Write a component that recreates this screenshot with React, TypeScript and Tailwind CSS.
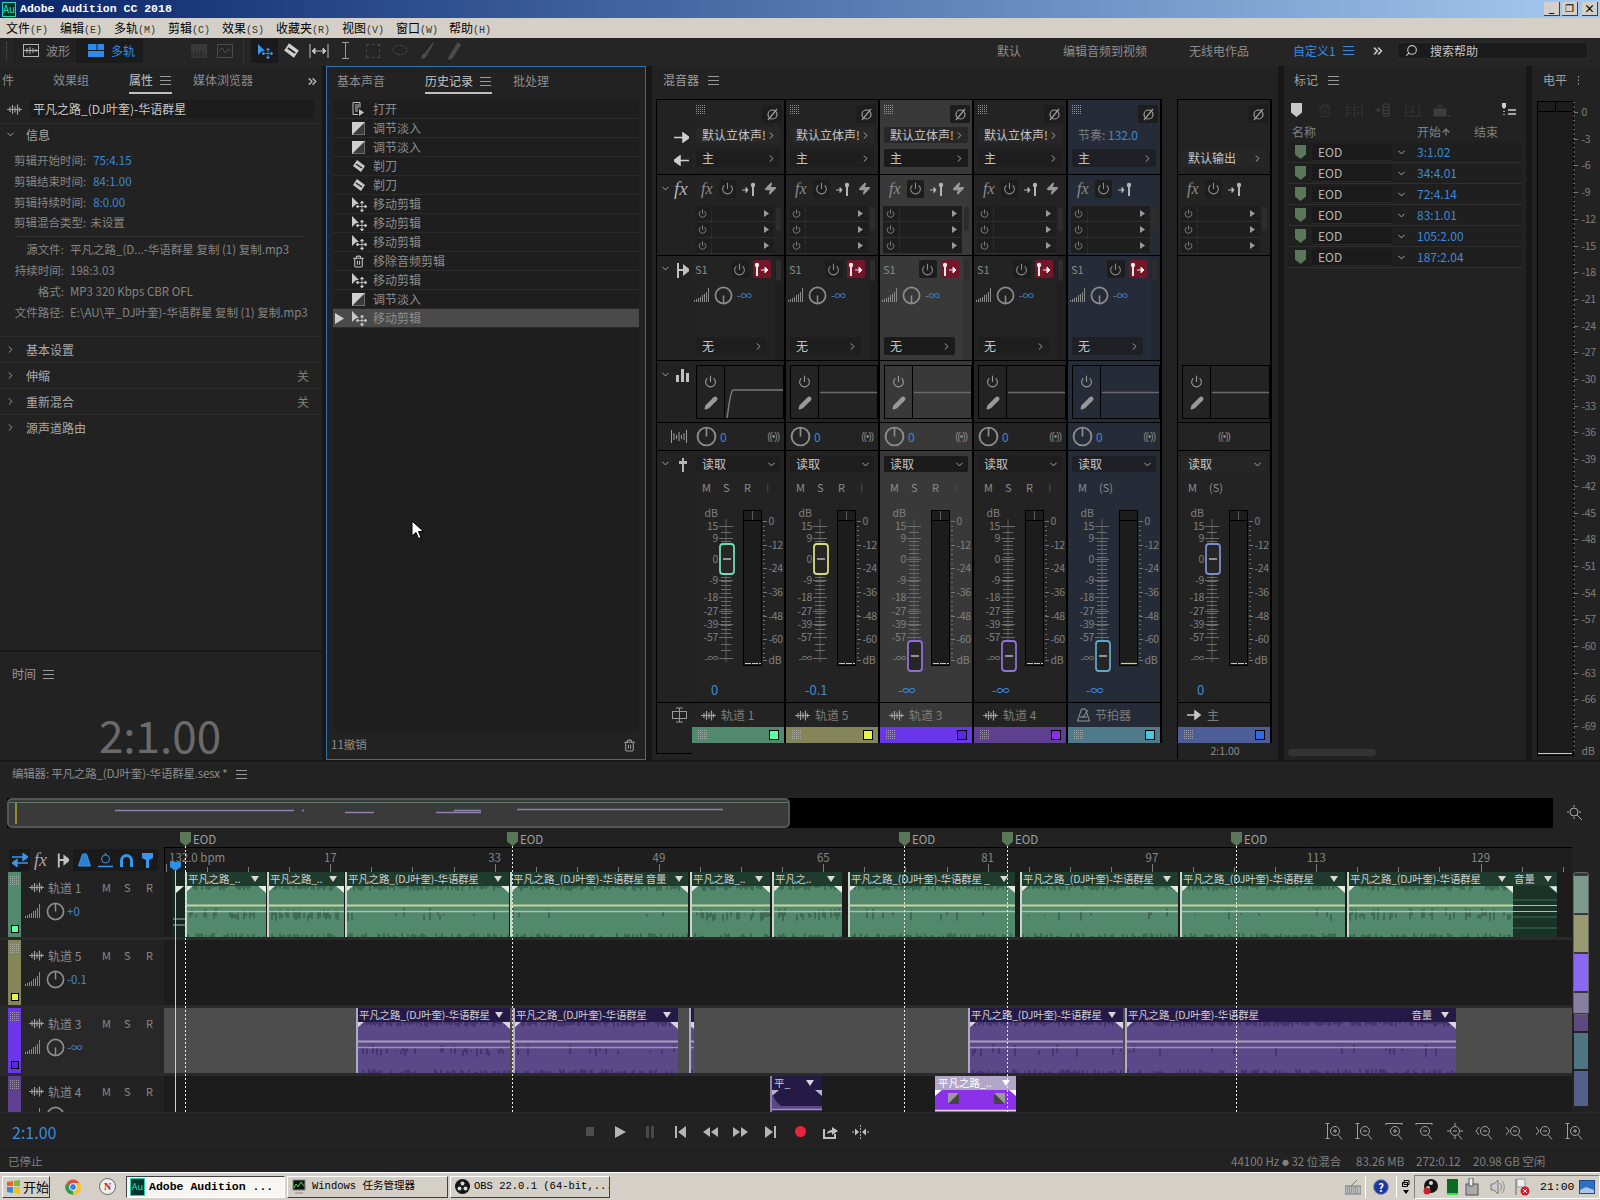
import React from "react";
import { ChevronRight, ChevronDown, Power, Pencil, Trash2, Search, ChevronsRight, ArrowUp, Zap } from "lucide-react";

const PANEL = "bg-[#222222]";

const Burger = ({ className = "text-[#9a9a9a]" }: { className?: string }) => (
  <svg width="11" height="9" viewBox="0 0 11 9" className={className}>
    <path d="M0 .5h11M0 4.5h11M0 8.5h11" stroke="currentColor" fill="none" />
  </svg>
);

const WaveIcon = ({ className = "text-[#a0a0a0]" }: { className?: string }) => (
  <svg width="15" height="11" viewBox="0 0 15 11" className={className}>
    <path d="M0 5.5h15M3 3v5M5.5 1v9M8 2.500v6M10.500 .5v10M12.500 3.500v4" stroke="currentColor" strokeWidth="1.200" fill="none" />
  </svg>
);

const Knob = ({ r = 8, down = false, color = "#8c8c8c" }: { r?: number; down?: boolean; color?: string }) => (
  <svg width={r * 2 + 3} height={r * 2 + 3} viewBox="-10 -10 20 20" className="shrink-0">
    <circle r="8.500" fill="none" stroke={color} strokeWidth="1.800" />
    <path d={down ? "M0 0V9" : "M0 0V-9"} stroke={color} strokeWidth="1.600" />
  </svg>
);

const Bars = () => (
  <svg width="16" height="15" viewBox="0 0 16 15" className="shrink-0">
    <path d="M.5 14v-2M2.500 14v-3M4.500 14v-4M6.500 14v-5M8.500 14v-7M10.500 14v-8M12.500 14v-10M14.500 14V0" stroke="#8a8a8a" strokeWidth="1" />
  </svg>
);

const Dots = () => (
  <svg width="10" height="10" viewBox="0 0 10 10" className="shrink-0">
    <path d="M0 .5h10M0 2.500h10M0 4.500h10M0 6.500h10M0 8.500h10" stroke="#b5b5b5" strokeDasharray="1 1" strokeOpacity=".75" />
  </svg>
);

const FadeIcon = () => (
  <svg width="13" height="13" viewBox="0 0 13 13">
    <rect width="13" height="13" fill="#3b3b3b" stroke="#9a9a9a" />
    <path d="M0 13L13 0V13Z" fill="#cfcfcf" transform="rotate(180 6.500 6.500)" />
  </svg>
);

const RazorIcon = () => (
  <svg width="14" height="14" viewBox="0 0 14 14">
    <path d="M5 1l8 6-4 6-8-6z" fill="#c8c8c8" />
    <path d="M4 5l6 4" stroke="#222" strokeWidth="1.500" />
  </svg>
);

const MoveIcon = ({ color = "#c9c9c9" }: { color?: string }) => (
  <svg width="16" height="16" viewBox="0 0 16 16">
    <path d="M1 1v11l3-3 1.500-1H8z" fill={color} />
    <path d="M11 6v9M6.500 10.500h9M11 5l-1.500 2h3zM11 16l-1.500-2h3zM5 10.500l2-1.500v3zM16 10.500l-2-1.500v3z" stroke={color} strokeWidth=".8" fill={color} />
  </svg>
);

const OpenIcon = () => (
  <svg width="13" height="14" viewBox="0 0 13 14">
    <path d="M1 .5h7v5M1 .5v12h5" stroke="#c0c0c0" fill="none" />
    <path d="M3 3h4M3 5h4M3 7h3M3 9h3" stroke="#c0c0c0" />
    <path d="M7 7v7l5-3.500z" fill="#c0c0c0" />
  </svg>
);

const Shield = ({ className = "text-[#5b7659]" }: { className?: string }) => (
  <svg width="11" height="14" viewBox="0 0 11 14" className={className}>
    <path d="M0 0h11v9.500L5.500 14 0 9.500z" fill="currentColor" />
  </svg>
);

const PhaseBtn = () => (
  <div className="w-[20px] h-[18px] flex items-center justify-center bg-[#1d1d1d] rounded-[2px]">
    <svg width="13" height="13" viewBox="0 0 13 13">
      <circle cx="6.500" cy="6.500" r="4.500" fill="none" stroke="#a0a0a0" strokeWidth="1.200" />
      <path d="M2 12L11 1" stroke="#a0a0a0" strokeWidth="1.200" />
    </svg>
  </div>
);

const SendArrow = ({ color = "#b5b5b5" }: { color?: string }) => (
  <svg width="15" height="14" viewBox="0 0 15 14">
    <path d="M0 8h6M6 8l-2-2.500v5z" stroke={color} fill={color} />
    <circle cx="11" cy="3" r="2.200" fill={color} />
    <rect x="10" y="3" width="2" height="11" fill={color} />
  </svg>
);

const TitleBar = () => (
  <div className="h-[18px] flex items-center bg-gradient-to-r from-[#0a246a] to-[#a6caf0] shrink-0">
    <div className="ml-[2px] w-[14px] h-[15px] flex items-center justify-center border border-[#23d8b0] bg-[#00332c] text-[#33e0bb] text-[10px] leading-none">
      Au
    </div>
    <span className="ml-[4px] text-white font-bold text-[11.500px] [font-family:'Liberation_Mono',monospace]">
      Adobe Audition CC 2018
    </span>
    <div className="ml-auto mr-[2px] flex gap-[2px]">
      <div className="w-[16px] h-[14px] bg-[#d4d0c8] border-b border-r border-[#404040] text-[10px] leading-[12px] text-center font-bold text-black">_</div>
      <div className="w-[16px] h-[14px] bg-[#d4d0c8] border-b border-r border-[#404040] text-[10px] leading-[12px] text-center text-black">❐</div>
      <div className="ml-[2px] w-[16px] h-[14px] bg-[#d4d0c8] border-b border-r border-[#404040] text-[11px] leading-[12px] text-center font-bold text-black">×</div>
    </div>
  </div>
);

const menus = [
  { t: "文件", k: "(F)", w: "w-[54px]" },
  { t: "编辑", k: "(E)", w: "w-[54px]" },
  { t: "多轨", k: "(M)", w: "w-[54px]" },
  { t: "剪辑", k: "(C)", w: "w-[54px]" },
  { t: "效果", k: "(S)", w: "w-[54px]" },
  { t: "收藏夹", k: "(R)", w: "w-[66px]" },
  { t: "视图", k: "(V)", w: "w-[54px]" },
  { t: "窗口", k: "(W)", w: "w-[53px]" },
  { t: "帮助", k: "(H)", w: "w-[54px]" },
];

const MenuBar = () => (
  <div className="h-[20px] flex items-center pl-[6px] bg-[#d4d0c8] shrink-0 text-[12px] text-black">
    {menus.map((m) => (
      <span key={m.t} className={`${m.w} whitespace-nowrap`}>
        {m.t}
        <span className="text-[10px] text-[#333] [font-family:'Liberation_Mono',monospace]">{m.k}</span>
      </span>
    ))}
  </div>
);

const ToolSlot = ({ children, active = false }: { children: React.ReactNode; active?: boolean }) => (
  <div className={`w-[27px] h-[24px] flex items-center justify-center ${active ? "bg-[#1a1a1a]" : ""}`}>{children}</div>
);

const dimStroke = "#4b4b4b";

const Toolbar = () => (
  <div className="h-[28px] pb-[3px] flex items-center bg-[#252525] shrink-0 text-[12px] text-[#8d8d8d]">
    <div className="ml-[6px] w-[3px] h-[18px] border-l border-dotted border-[#555]" />
    <div className="ml-[5px] w-[62px] h-[24px] flex items-center pl-[9px] gap-[7px] bg-[#222]">
      <svg width="16" height="13" viewBox="0 0 16 13">
        <rect x=".5" y=".5" width="15" height="12" fill="none" stroke="#b5b5b5" />
        <path d="M1 6.500h14M4 4v5M7 3v7M10 4v5M13 5v3" stroke="#b5b5b5" />
      </svg>
      波形
    </div>
    <div className="w-[67px] h-[24px] flex items-center pl-[12px] gap-[7px] bg-[#1b1b1b] text-[#2d8ceb]">
      <svg width="16" height="13" viewBox="0 0 16 13">
        <rect width="16" height="13" fill="#2d8ceb" />
        <path d="M0 6.500h16M9 0v6" stroke="#1b1b1b" />
      </svg>
      多轨
    </div>
    <div className="ml-[43px] w-[26px] flex justify-center">
      <svg width="16" height="14" viewBox="0 0 16 14">
        <rect width="16" height="14" fill="#393939" />
        <path d="M1 13V9M4 13V7M7 13V8M10 13V6M13 13V8" stroke="#222" />
      </svg>
    </div>
    <div className="w-[26px] flex justify-center">
      <svg width="16" height="14" viewBox="0 0 16 14">
        <rect x=".5" y=".5" width="15" height="13" fill="none" stroke={dimStroke} />
        <path d="M2 7l3-3 3 5 3-4 3 2" stroke={dimStroke} fill="none" />
      </svg>
    </div>
    <div className="ml-[5px] w-px h-[24px] bg-[#333]" />
    <div className="ml-[7px] flex items-center">
      <ToolSlot active>
        <MoveIcon color="#3796ee" />
      </ToolSlot>
      <ToolSlot>
        <svg width="17" height="17" viewBox="0 0 14 14">
          <path d="M5 1l8 6-4 6-8-6z" fill="#cfcfcf" />
          <path d="M4 5l6 4" stroke="#222" strokeWidth="1.500" />
        </svg>
      </ToolSlot>
      <ToolSlot>
        <svg width="20" height="14" viewBox="0 0 20 14">
          <path d="M1 0v14M19 0v14M3 7h14M3 7l3-3v6zM17 7l-3-3v6z" stroke="#c0c0c0" fill="#c0c0c0" />
        </svg>
      </ToolSlot>
      <ToolSlot>
        <svg width="9" height="17" viewBox="0 0 9 17">
          <path d="M1 .5h7M1 16.500h7M4.500 1v15" stroke="#9a9a9a" fill="none" />
        </svg>
      </ToolSlot>
      <ToolSlot>
        <div className="w-[14px] h-[14px] border border-dashed border-[#4b4b4b]" />
      </ToolSlot>
      <ToolSlot>
        <svg width="16" height="14" viewBox="0 0 16 14">
          <ellipse cx="8" cy="6" rx="7" ry="4.500" fill="none" stroke={dimStroke} strokeDasharray="2 1" />
        </svg>
      </ToolSlot>
      <ToolSlot>
        <svg width="14" height="18" viewBox="0 0 14 18">
          <path d="M13 0L5 11l-3 2-1 4 4-1 2-3 7-12z" fill={dimStroke} />
        </svg>
      </ToolSlot>
      <ToolSlot>
        <svg width="14" height="18" viewBox="0 0 14 18">
          <path d="M11 0l3 3L5 17l-4 1 1-4z" fill={dimStroke} />
        </svg>
      </ToolSlot>
    </div>
    <span className="ml-[530px] w-[24px] whitespace-nowrap">默认</span>
    <span className="ml-[42px] w-[84px] whitespace-nowrap">编辑音频到视频</span>
    <span className="ml-[42px] w-[60px] whitespace-nowrap">无线电作品</span>
    <span className="ml-[44px] w-[42px] whitespace-nowrap text-[#2d8ceb]">自定义1</span>
    <div className="ml-[8px]">
      <Burger className="text-[#2d8ceb]" />
    </div>
    <ChevronsRight size={14} className="ml-[17px] text-[#c0c0c0]" strokeWidth={3} />
    <div className="ml-[12px] w-[191px] h-[17px] flex items-center bg-[#1b1b1b] border border-[#2c2c2c] text-[#c4c4c4]">
      <Search size={13} className="ml-[7px] -scale-x-100" />
      <span className="ml-[12px]">搜索帮助</span>
    </div>
  </div>
);

const infoRows = [
  ["剪辑开始时间:", "75:4.15"],
  ["剪辑结束时间:", "84:1.00"],
  ["剪辑持续时间:", "8:0.00"],
];
const fileRows = [
  ["源文件:", "平凡之路_(D...-华语群星 复制 (1) 复制.mp3"],
  ["持续时间:", "198:3.03"],
  ["格式:", "MP3 320 Kbps CBR OFL"],
  ["文件路径:", "E:\\AU\\平_DJ叶奎)-华语群星 复制 (1) 复制.mp3"],
];
const sections = [
  ["基本设置", ""],
  ["伸缩", "关"],
  ["重新混合", "关"],
  ["源声道路由", ""],
];

const LeftColumn = () => (
  <div className="w-[322px] flex flex-col gap-[2px] shrink-0">
    <div className={`h-[584px] ${PANEL}`}>
      <div className="h-[28px] flex items-end text-[12px] text-[#8d8d8d]">
        <span className="ml-[2px] w-[51px] pb-[5px]">件</span>
        <span className="w-[76px] pb-[5px]">效果组</span>
        <div className="w-[43px] flex items-center gap-[7px] border-b-2 border-[#c0c0c0] pb-[3px] text-[#c4c4c4]">
          属性 <Burger />
        </div>
        <span className="ml-[21px] w-[113px] pb-[5px]">媒体浏览器</span>
        <ChevronsRight size={13} strokeWidth={3} className="mb-[6px] text-[#b0b0b0]" />
      </div>
      <div className="mt-[6px] flex items-center">
        <div className="ml-[7px]">
          <WaveIcon />
        </div>
        <div className="ml-[8px] w-[284px] h-[18px] flex items-center pl-[3px] bg-[#1c1c1c] text-[12px] text-[#c8c8c8] whitespace-nowrap">
          平凡之路_(DJ叶奎)-华语群星
        </div>
      </div>
      <div className="mt-[5px] border-t border-[#2c2c2c] pt-[2px] h-[20px] flex items-center text-[12px] text-[#a8a8a8]">
        <ChevronDown size={11} className="ml-[5px]" />
        <span className="ml-[10px]">信息</span>
      </div>
      <div className="mt-[7px] flex flex-col text-[11.500px] text-[#858585]">
        {infoRows.map(([a, b]) => (
          <div key={a} className="h-[21px] ml-[14px] flex items-center whitespace-nowrap">
            {a}
            <span className="ml-[7px] text-[#3b8ad9]">{b}</span>
          </div>
        ))}
        <div className="h-[19px] ml-[14px] flex items-center whitespace-nowrap">
          剪辑混合类型: <span className="ml-[4px]">未设置</span>
        </div>
        <div className="mt-[4px] mb-[2px] mx-[16px] h-px bg-[#303030]" />
        {fileRows.map(([a, b]) => (
          <div key={a} className="h-[21px] flex items-center whitespace-nowrap">
            <span className="w-[64px] text-right">{a}</span>
            <span className="ml-[6px]">{b}</span>
          </div>
        ))}
      </div>
      <div className="mt-[13px] flex flex-col text-[12px] text-[#a8a8a8]">
        {sections.map(([a, b]) => (
          <div key={a} className="h-[26px] flex items-center border-t border-[#2c2c2c]">
            <ChevronRight size={11} className="ml-[5px]" />
            <span className="ml-[10px]">{a}</span>
            <span className="ml-auto mr-[13px] text-[#808080]">{b}</span>
          </div>
        ))}
      </div>
    </div>
    <div className={`h-[108px] overflow-hidden ${PANEL}`}>
      <div className="mt-[13px] ml-[12px] flex items-center gap-[7px] text-[12px] text-[#9a9a9a]">
        时间 <Burger />
      </div>
      <div className="mt-[29px] text-center pr-[2px] text-[44px] leading-[44px] text-[#6a6a6a]">2:1.00</div>
    </div>
  </div>
);

const historyRows = [
  { t: "打开", i: <OpenIcon /> },
  { t: "调节淡入", i: <FadeIcon /> },
  { t: "调节淡入", i: <FadeIcon /> },
  { t: "剃刀", i: <RazorIcon /> },
  { t: "剃刀", i: <RazorIcon /> },
  { t: "移动剪辑", i: <MoveIcon /> },
  { t: "移动剪辑", i: <MoveIcon /> },
  { t: "移动剪辑", i: <MoveIcon /> },
  { t: "移除音频剪辑", i: <Trash2 size={13} className="text-[#c0c0c0]" /> },
  { t: "移动剪辑", i: <MoveIcon /> },
  { t: "调节淡入", i: <FadeIcon /> },
  { t: "移动剪辑", i: <MoveIcon />, on: true },
];

const History = () => (
  <div className={`relative ml-[4px] w-[320px] flex flex-col border border-[#2f71ad] ${PANEL} shrink-0`}>
    <div className="h-[27px] flex items-end text-[12px] text-[#8d8d8d]">
      <span className="ml-[10px] w-[88px] pb-[4px]">基本声音</span>
      <div className="w-[67px] flex items-center gap-[7px] border-b-2 border-[#c0c0c0] pb-[2px] text-[#c4c4c4]">
        历史记录 <Burger />
      </div>
      <span className="ml-[21px] pb-[4px]">批处理</span>
    </div>
    <div className="mt-[6px] mx-[6px] flex-1 flex flex-col bg-[#1e1e1e] text-[12px] text-[#8d8d8d]">
      {historyRows.map((r, i) => (
        <div key={i} className={`h-[19px] shrink-0 flex items-center border-b border-[#2a2a2a] ${r.on ? "bg-[#4a4a4a]" : ""}`}>
          <div className="ml-[2px] w-[10px]">
            {r.on && (
              <svg width="9" height="11" viewBox="0 0 9 11">
                <path d="M0 0l9 5.500L0 11z" fill="#cfcfcf" />
              </svg>
            )}
          </div>
          <div className="ml-[5px] w-[17px] flex justify-center">{r.i}</div>
          <span className="ml-[6px]">{r.t}</span>
        </div>
      ))}
    </div>
    <div className="h-[28px] flex items-center text-[11.500px] text-[#8d8d8d]">
      <span className="ml-[4px]">11撤销</span>
      <Trash2 size={13} className="ml-auto mr-[9px] text-[#9a9a9a]" />
    </div>
    <svg width="13" height="20" viewBox="0 0 13 20" className="absolute left-[84px] top-[453px]">
      <path d="M1 1v15l4-3.500 2.500 6 2.500-1-2.500-6H12.500z" fill="#fff" stroke="#000" />
    </svg>
  </div>
);

type Chan = {
  name: string;
  bg: string;
  strip: string;
  swatch: string;
  handle: string;
  value: string;
  zero: boolean;
  select: string;
  input: React.ReactNode;
  bolt?: boolean;
  icon?: "wave" | "metro" | "master";
  mode?: "normal" | "metro" | "master";
  curve?: boolean;
};

const defaultInput = <span>默认立体声!</span>;

const chans: Chan[] = [
  { name: "轨道 1", bg: "bg-[#232323]", strip: "bg-[#528a6f]", swatch: "bg-[#5dffa6]", handle: "#6fdcb2", value: "0", zero: true, select: "bg-[#1e1e1e]", input: defaultInput, bolt: true, curve: true },
  { name: "轨道 5", bg: "bg-[#232323]", strip: "bg-[#85855a]", swatch: "bg-[#e8f24c]", handle: "#d8dc78", value: "-0.1", zero: true, select: "bg-[#1e1e1e]", input: defaultInput, bolt: true },
  { name: "轨道 3", bg: "bg-[#393939]", strip: "bg-[#6b36ea]", swatch: "bg-[#5a28e0]", handle: "#8f6fd8", value: "-∞", zero: false, select: "bg-[#1b1b1b]", input: defaultInput, bolt: true },
  { name: "轨道 4", bg: "bg-[#232323]", strip: "bg-[#5f3f8f]", swatch: "bg-[#8a2fe8]", handle: "#8f6fd8", value: "-∞", zero: false, select: "bg-[#1e1e1e]", input: defaultInput, bolt: true },
  {
    name: "节拍器",
    bg: "bg-[#262c37]",
    strip: "bg-[#4e7a89]",
    swatch: "bg-[#4fc5e0]",
    handle: "#5aa8c8",
    value: "-∞",
    zero: false,
    select: "bg-[#1e2026]",
    input: (
      <span className="text-[#7a7f88]">
        节奏: <span className="text-[#3b8ad9]">132.0</span>
      </span>
    ),
    icon: "metro",
    mode: "metro",
  },
];

const leftTicks: [string, number][] = [
  ["15", 25],
  ["9", 37],
  ["0", 58],
  ["-9", 79],
  ["-18", 96],
  ["-27", 110],
  ["-39", 123],
  ["-57", 136],
  ["-∞", 157],
];
const rightTicks: [string, number][] = [
  ["0", 20],
  ["-12", 44],
  ["-24", 67],
  ["-36", 91],
  ["-48", 115],
  ["-60", 138],
  ["dB", 159],
];

const minorYs: number[] = [];
for (let y = 40; y < 136; y += 4) minorYs.push(y);
minorYs.push(31, 143, 149);
const meterYs: number[] = [];
for (let y = 20; y <= 160; y += 4.700) meterYs.push(y);

const Fader = ({ c }: { c: Chan }) => {
  const hy = c.zero ? 43 : 140;
  return (
    <svg width="92" height="180" viewBox="0 0 92 180" className="block">
      <path d="M34 18V161" stroke="#5c5c5c" />
      <text x="26" y="16" textAnchor="end" fontSize="10.500" fill="#808080">
        dB
      </text>
      {leftTicks.map(([t, y]) => (
        <g key={t}>
          <path d={`M27 ${y}.5H41`} stroke="#6c6c6c" />
          <text x="26" y={y + 4} textAnchor="end" fontSize="10.500" letterSpacing="-.3" fill="#808080">
            {t}
          </text>
        </g>
      ))}
      {minorYs.map((y) => (
        <path key={y} d={`M29 ${y}.5H39`} stroke="#6c6c6c" />
      ))}
      <rect x="28" y={hy} width="14" height="30" rx="3" fill="#262626" stroke={c.handle} strokeWidth="1.800" />
      <path d={`M31 ${hy + 15}H39`} stroke="#b8b8b8" strokeWidth="1.500" />
      <rect x="51.500" y="9.500" width="18" height="155" fill="#1c1c1c" stroke="#000" />
      {c.mode !== "metro" && <path d="M60.500 10V19" stroke="#5a5a5a" />}
      <path d="M52 19.500H69" stroke="#000" />
      <path d="M53 162.500H69" stroke="#d8e021" strokeWidth="1.200" strokeDasharray={c.mode === "metro" ? undefined : "6 1"} />
      {meterYs.map((y, i) => (
        <path key={i} d={`M71 ${Math.round(y)}.5H73`} stroke="#6c6c6c" />
      ))}
      {rightTicks.map(([t, y]) => (
        <g key={t}>
          <path d={`M71 ${y}.5H75`} stroke="#777" />
          <text x="76.500" y={y + 4} fontSize="10.500" letterSpacing="-.3" fill="#808080">
            {t}
          </text>
        </g>
      ))}
    </svg>
  );
};

const Selector = ({ bg, children, arrow = "right", w = "mx-[4px]", h = "h-[18px]" }: { bg: string; children: React.ReactNode; arrow?: "right" | "down" | "none"; w?: string; h?: string }) => (
  <div className={`${w} ${h} flex items-center pl-[6px] pr-[3px] rounded-[2px] ${bg} text-[12px] leading-[16px] text-[#c4c4c4] whitespace-nowrap`}>
    <span className="flex-1">{children}</span>
    {arrow === "right" && <ChevronRight size={11} className="shrink-0 text-[#b5b5b5]" />}
    {arrow === "down" && <ChevronDown size={11} className="shrink-0 text-[#b5b5b5]" />}
  </div>
);

const SmallFx = () => (
  <div className="flex-1 flex flex-col">
    {[0, 1, 2].map((k) => (
      <div key={k} className="h-[16px] ml-[3px] flex items-center border-b border-[#2e2e2e] bg-[#1e1e1e]">
        <Power size={9} className="ml-[3px] text-[#9a9a9a]" />
        <div className="ml-[4px] w-px h-full bg-[#2a2a2a]" />
        <svg width="5" height="7" viewBox="0 0 5 7" className="ml-auto mr-[5px]">
          <path d="M0 0l5 3.500L0 7z" fill="#9a9a9a" />
        </svg>
      </div>
    ))}
  </div>
);

const Channel = ({ c, master = false }: { c: Chan; master?: boolean }) => (
  <div className={`w-[94px] shrink-0 flex flex-col border-r-2 border-black ${c.bg}`}>
    <div className="h-[75px] shrink-0 border-b border-black pt-[5px]">
      <div className="h-[18px] flex items-start justify-between pl-[4px] pr-[2px]">
        {master ? <span /> : <Dots />}
        <PhaseBtn />
      </div>
      <div className="mt-[4px] h-[16px]">
        {!master && (
          <Selector bg={c.mode === "metro" ? "" : "bg-[#272727]"} h="h-[16px]" arrow={c.mode === "metro" ? "none" : "right"}>
            {c.input}
          </Selector>
        )}
      </div>
      <div className="mt-[6px]">
        <Selector bg={c.select}>{master ? "默认输出" : "主"}</Selector>
      </div>
    </div>
    <div className="h-[81px] shrink-0 border-b border-black flex flex-col">
      <div className="h-[31px] pb-[4px] flex items-center pl-[9px] text-[#8c8c8c]">
        <span className="w-[17px] italic text-[16px] [font-family:'Liberation_Serif',serif]">fx</span>
        <div className="ml-[1px] w-[17px] h-[18px] flex items-center justify-center bg-[#1d1d1d] rounded-[2px]">
          <Power size={13} />
        </div>
        <div className="ml-[6px]">
          <SendArrow />
        </div>
        {c.bolt && <Zap size={13} fill="#9a9a9a" className="ml-[7px] text-[#9a9a9a]" />}
      </div>
      <div className="flex">
        <SmallFx />
        <div className="w-[10px] pl-[2px] pt-[1px]">
          <div className="w-[5px] h-[24px] rounded-[2px] bg-[#2d2d2d]" />
        </div>
      </div>
    </div>
    <div className={`h-[105px] shrink-0 flex ${master ? "" : "border-b border-black"}`}>
      {!master && (
        <>
          <div className="flex-1 flex flex-col">
            <div className="mt-[4px] h-[18px] flex items-center pl-[3px] text-[11px] text-[#8a8a8a]">
              S1
              <div className="ml-[23px] w-[18px] h-[18px] flex items-center justify-center bg-[#1d1d1d] rounded-[2px]">
                <Power size={13} />
              </div>
              <div className="ml-[4px] w-[18px] h-[18px] flex items-center justify-center bg-[#74162a] rounded-[2px]">
                <svg width="15" height="14" viewBox="0 0 15 14">
                  <circle cx="3" cy="3" r="2.200" fill="#e8e8e8" />
                  <rect x="2" y="3" width="2" height="11" fill="#e8e8e8" />
                  <path d="M7 8h4M14 8l-3-3v6z" stroke="#e8e8e8" fill="#e8e8e8" />
                </svg>
              </div>
            </div>
            <div className="mt-[7px] h-[20px] flex items-center pl-[2px]">
              <Bars />
              <div className="ml-[4px]">
                <Knob r={8} down />
              </div>
              <span className="ml-[4px] text-[11px] text-[#3b8ad9]">-∞</span>
            </div>
            <div className="mt-auto mb-[5px]">
              <Selector bg={c.select} w="ml-[4px] mr-[8px]">
                无
              </Selector>
            </div>
          </div>
          <div className="w-[9px] pt-[3px] bg-black/10">
            <div className="w-[5px] h-[22px] ml-[1px] rounded-[2px] bg-[#2d2d2d]" />
          </div>
        </>
      )}
    </div>
    <div className="h-[62px] shrink-0 border-b border-black pt-[4px]">
      <div className="ml-[4px] h-[54px] flex border border-black">
        <div className="w-[28px] flex flex-col items-center justify-center gap-[8px] text-[#9a9a9a]">
          <Power size={13} />
          <Pencil size={14} fill="#9a9a9a" />
        </div>
        <div className="flex-1 border-l border-black">
          <svg width="58" height="52" viewBox="0 0 58 52" className="block">
            {c.curve ? <path d="M2 52C4 40 5 26 8 24H58" stroke="#7a7a7a" strokeWidth="1.500" fill="none" /> : <path d="M1 26.500H58" stroke="#6a6a6a" strokeWidth="1.500" />}
          </svg>
        </div>
      </div>
    </div>
    <div className="h-[28px] shrink-0 border-b border-black flex items-center text-[12px]">
      {!master && (
        <>
          <div className="ml-[4px]">
            <Knob r={9} />
          </div>
          <span className="ml-[3px] text-[#3b8ad9]">0</span>
        </>
      )}
      <span className={`text-[10px] tracking-[-1px] text-[#8a8a8a] whitespace-nowrap [font-family:'Liberation_Sans',sans-serif] ${master ? "mx-auto" : "ml-auto mr-[5px]"}`}>((•))</span>
    </div>
    <div className="h-[252px] shrink-0 border-b border-black flex flex-col">
      <div className="mt-[5px]">
        <Selector bg={c.select} h="h-[16px]" arrow="down">
          读取
        </Selector>
      </div>
      <div className="h-[16px] mt-[7px] flex items-center text-[11px] text-[#8c8c8c]">
        <span className="ml-[10px] w-[21px]">M</span>
        {c.mode === "metro" || master ? (
          <span>(S)</span>
        ) : (
          <>
            <span className="w-[21px]">S</span>
            <span className="w-[22px]">R</span>
            <span className="text-[#4e4e4e]">I</span>
          </>
        )}
      </div>
      <div className="mt-[6px]">
        <Fader c={c} />
      </div>
      <div className={`mt-[2px] text-[13px] leading-[14px] text-[#3b8ad9] ${c.value === "-∞" ? "pl-[18px]" : "pl-[19px]"}`}>{c.value}</div>
    </div>
    <div className="h-[24px] shrink-0 flex items-center pl-[9px] text-[12px] text-[#7d7d7d]">
      {c.icon === "metro" ? (
        <svg width="13" height="14" viewBox="0 0 13 14">
          <path d="M4.500 1h4l4 12H.5zM3 9h7M6 9l5-7" stroke="#9a9a9a" fill="none" />
        </svg>
      ) : c.icon === "master" ? (
        <svg width="14" height="12" viewBox="0 0 14 12">
          <path d="M0 6h8M8 2l5 4-5 4z" stroke="#c8c8c8" fill="#c8c8c8" strokeWidth="1.500" />
        </svg>
      ) : (
        <WaveIcon />
      )}
      <span className={c.icon === "master" ? "ml-[6px]" : "ml-[5px]"}>{c.name}</span>
    </div>
    <div className={`h-[16px] shrink-0 flex items-center justify-between pl-[6px] pr-[5px] ${c.strip}`}>
      <Dots />
      <div className={`w-[10px] h-[10px] border border-black ${c.swatch}`} />
    </div>
  </div>
);

const masterChan: Chan = {
  name: "主",
  bg: "bg-[#232323]",
  strip: "bg-[#4c5d9a]",
  swatch: "bg-[#2f6ae0]",
  handle: "#7b8fd0",
  value: "0",
  zero: true,
  select: "bg-[#262626]",
  input: null,
  icon: "master",
  mode: "master",
};

const LabelCol = () => (
  <div className="w-[36px] shrink-0 flex flex-col border-l border-black text-[#b0b0b0]">
    <div className="h-[75px] border-b border-black flex flex-col items-end justify-end pb-[8px] pr-[3px] gap-[12px]">
      <svg width="15" height="11" viewBox="0 0 15 11">
        <path d="M0 5.500h10M15 5.500L9 1v9z" stroke="#cfcfcf" fill="#cfcfcf" strokeWidth="1.500" />
      </svg>
      <svg width="15" height="11" viewBox="0 0 15 11">
        <path d="M15 5.500H5M0 5.500L6 1v9z" stroke="#cfcfcf" fill="#cfcfcf" strokeWidth="1.500" />
      </svg>
    </div>
    <div className="h-[81px] border-b border-black flex pt-[5px] pl-[3px] items-start">
      <ChevronDown size={11} className="mt-[3px]" />
      <span className="ml-[3px] italic text-[19px] leading-[18px] [font-family:'Liberation_Serif',serif]">fx</span>
    </div>
    <div className="h-[105px] border-b border-black flex pt-[7px] pl-[3px] items-start">
      <ChevronDown size={11} />
      <svg width="14" height="15" viewBox="0 0 14 15" className="ml-[4px]">
        <path d="M3 0v15M3 7h7M14 7l-5-4v8z" stroke="#c0c0c0" fill="#c0c0c0" strokeWidth="2" />
      </svg>
    </div>
    <div className="h-[62px] border-b border-black flex pt-[8px] pl-[3px] items-start">
      <ChevronDown size={11} />
      <svg width="13" height="13" viewBox="0 0 13 13" className="ml-[5px]">
        <path d="M0 13V6h3v7zM5 13V0h3v13zM10 13V4h3v9z" fill="#c0c0c0" />
      </svg>
    </div>
    <div className="h-[28px] border-b border-black flex items-center justify-end pr-[5px]">
      <svg width="16" height="13" viewBox="0 0 16 13">
        <path d="M.5 0v13M15.500 0v13M3 3v7M5.500 5v4M8 2v9M10.500 5v4M13 3v7" stroke="#9a9a9a" />
      </svg>
    </div>
    <div className="h-[252px] border-b border-black flex pt-[7px] pl-[3px] items-start">
      <ChevronDown size={11} />
      <svg width="10" height="14" viewBox="0 0 10 14" className="ml-[7px]">
        <path d="M1 3h8v3H1zM4 0h2v14H4z" fill="#b5b5b5" />
      </svg>
    </div>
    <div className="h-[51px] border-b border-black flex items-start justify-end pt-[4px] pr-[5px]">
      <svg width="15" height="16" viewBox="0 0 15 16">
        <rect x=".5" y="4.500" width="14" height="7" fill="none" stroke="#9a9a9a" />
        <path d="M7.500 1v14M4 1h7M4 15h7" stroke="#9a9a9a" fill="none" />
      </svg>
    </div>
  </div>
);

const Mixer = () => (
  <div className={`ml-[6px] w-[626px] shrink-0 flex flex-col ${PANEL}`}>
    <div className="h-[33px] pb-[5px] shrink-0 flex items-center pl-[11px] gap-[9px] text-[12px] text-[#a0a0a0]">
      混音器 <Burger />
    </div>
    <div className="flex items-start pl-[4px]">
      <div className="flex flex-col border-t border-black">
        <LabelCol />
      </div>
      <div className="flex border-t border-black">
        {chans.map((c) => (
          <Channel key={c.name} c={c} />
        ))}
      </div>
      <div className="ml-[15px] flex flex-col border-t border-l border-black">
        <Channel c={masterChan} master />
        <div className="h-[16px] flex items-center justify-center text-[10.500px] text-[#8d8d8d]">2:1.00</div>
      </div>
    </div>
  </div>
);

const markerVals = ["3:1.02", "34:4.01", "72:4.14", "83:1.01", "105:2.00", "187:2.04"];

const markerTools = [
  <Trash2 key="t" size={15} strokeWidth={1} />,
  <svg key="a" width="17" height="14" viewBox="0 0 17 14"><path d="M1 0v14M8.500 0v14M16 0v14M3 4h2M11 4h2M3 10h2M11 10h2" stroke="currentColor" strokeDasharray="2 1" /></svg>,
  <svg key="b" width="15" height="14" viewBox="0 0 15 14"><path d="M0 7h5M5 7L3 5v4zM8 1h6v12H8zM8 4.500h6M8 7.500h6M8 10.500h6" stroke="currentColor" fill="none" /></svg>,
  <svg key="c" width="17" height="14" viewBox="0 0 17 14"><path d="M2 0v11M15 0v11M0 13h17M6 9h5M8.500 3v6" stroke="currentColor" strokeDasharray="2 1" /></svg>,
  <svg key="d" width="19" height="14" viewBox="0 0 19 14"><path d="M1 6h12v7H1zM7 0v6M4 3h6M15 13h3" stroke="currentColor" fill="currentColor" /></svg>,
];

const Markers = () => (
  <div className={`ml-[6px] w-[242px] shrink-0 flex flex-col ${PANEL}`}>
    <div className="h-[33px] pb-[5px] flex items-center pl-[10px] gap-[10px] text-[12px] text-[#a0a0a0]">
      标记 <Burger />
    </div>
    <div className="h-[22px] flex items-center pl-[7px] text-[#3e3e3e]">
      <Shield className="text-[#c8c8c8]" />
      <div className="ml-[15px] flex items-center">
        {markerTools.map((t, i) => (
          <div key={i} className="w-[29px] flex justify-start">
            {t}
          </div>
        ))}
      </div>
      <svg width="15" height="14" viewBox="0 0 15 14" className="ml-auto mr-[10px]">
        <path d="M1 0h4v4L3 6 1 4z" fill="#d0d0d0" />
        <path d="M7 7h8M7 11h8M3 8v1M3 11v1" stroke="#d0d0d0" strokeWidth="1.500" />
      </svg>
    </div>
    <div className="h-[21px] flex items-center text-[12px] text-[#808080]">
      <span className="ml-[8px] w-[125px]">名称</span>
      <span>开始</span>
      <ArrowUp size={10} strokeWidth={3} />
      <span className="ml-[23px]">结束</span>
    </div>
    <div className="mx-[4px] flex-1 flex flex-col">
      {markerVals.map((v) => (
        <div key={v} className="h-[21px] shrink-0 flex items-center border-b border-[#2e2e2e] text-[12px] bg-[#1f1f1f]">
          <div className="ml-[7px]">
            <Shield />
          </div>
          <div className="ml-[6px] w-[80px] h-[17px] flex items-center pl-[6px] bg-[#1a1a1a] text-[#b5b5b5] border-b border-[#2c2c2c]">EOD</div>
          <div className="w-[19px] flex justify-center">
            <ChevronDown size={11} className="text-[#b5b5b5]" />
          </div>
          <span className="ml-[6px] text-[#3b8ad9]">{v}</span>
        </div>
      ))}
    </div>
    <div className="h-[11px] pl-[4px] pb-[4px]">
      <div className="w-[88px] h-[7px] rounded-full bg-[#333]" />
    </div>
  </div>
);

const levelLabels: [string, number][] = [];
for (let i = 0; i <= 23; i++) levelLabels.push([i === 0 ? "0" : `-${i * 3}`, 12 + i * 26.700]);

const Levels = () => (
  <div className={`ml-[6px] w-[68px] shrink-0 flex flex-col ${PANEL}`}>
    <div className="h-[33px] pb-[5px] flex items-center pl-[11px] gap-[10px] text-[12px] text-[#a0a0a0]">
      电平
      <svg width="3" height="9" viewBox="0 0 3 9">
        <path d="M1.500 0v1.500M1.500 3.500v1.500M1.500 7v1.500" stroke="#9a9a9a" />
      </svg>
    </div>
    <svg width="68" height="658" viewBox="0 0 68 658" className="mt-[1px]">
      <rect x="5.500" y="1.500" width="36" height="654" fill="#1c1c1c" stroke="#000" />
      <path d="M6 11.500H41M23.500 2V11M6 1.500H41" stroke="#000" />
      <path d="M6 653.500H40" stroke="#d8e021" />
      <path d="M42 2V652" stroke="#6c6c6c" strokeDasharray="1 3.500" strokeWidth="2" />
      {levelLabels.map(([t, y]) => (
        <g key={t}>
          <path d={`M42 ${Math.round(y)}.5H46`} stroke="#777" />
          <text x="49.500" y={y + 4} fontSize="10.500" letterSpacing="-.3" fill="#808080">
            {t}
          </text>
        </g>
      ))}
      <text x="49.500" y="655" fontSize="10.500" fill="#808080">
        dB
      </text>
    </svg>
  </div>
);

const seedRand = (seed: number) => {
  let s = seed;
  return () => {
    s = (s * 9301 + 49297) % 233280;
    return s / 233280;
  };
};

const Wave = ({ w, h, seed, dense, ink, l1, l2, tri = "#e2ebe5", ly1, ly2 }: { w: number; h: number; seed: number; dense: number; ink: string; l1: string; l2: string; tri?: string; ly1: number; ly2: number }) => {
  const r = seedRand(seed);
  let d = "";
  for (let x = 1; x < w; x += 2) {
    if (r() < 0.8) d += `M${x} 0V${(1 + r() * 4).toFixed(1)}`;
    if (r() < 0.5) d += `M${x} ${h}V${(h - 1 - r() * 3).toFixed(1)}`;
    if (r() < dense) {
      const c = (ly2 + 4);
      d += `M${x} ${(c - r() * 7).toFixed(1)}V${(c + r() * 6).toFixed(1)}`;
    }
  }
  return (
    <svg width={w} height={h} viewBox={`0 0 ${w} ${h}`} className="block">
      <path d={d} stroke={ink} fill="none" strokeWidth=".8" />
      <path d={`M0 ${ly1}.5H${w}`} stroke={l1} strokeWidth="2" />
      <path d={`M0 ${ly2}.5H${w}`} stroke={l2} strokeWidth="1.500" />
      <path d={`M0 0H8L0 7Z`} fill={tri} />
      <path d={`M${w} 0H${w - 8}L${w} 7Z`} fill={tri} />
    </svg>
  );
};

type Clip = { x: number; end: number; name: string; tag?: string; dense: number };

const Clipped = ({ c, palette, i }: { c: Clip; palette: "green" | "purple"; i: number }) => {
  const green = palette === "green";
  const w = c.end - c.x;
  return (
    <div className="absolute top-0 bottom-0 flex flex-col overflow-hidden" style={{ left: c.x - 164, width: w }}>
      <div className={`h-[14px] shrink-0 flex items-center pl-[3px] text-[10.500px] tracking-[-0.2px] leading-[14px] text-[#cfcfcf] whitespace-nowrap ${green ? "bg-[#1f3b2d]" : "bg-[#241a45]"}`}>
        <span>{c.name}</span>
        <span className="ml-auto flex items-center pl-[2px] pr-[7px]">
          {c.tag && <span className="mr-[9px]">{c.tag}</span>}
          <svg width="8" height="6" viewBox="0 0 8 6">
            <path d="M0 0h8L4 6z" fill="#d8d8d8" />
          </svg>
        </span>
      </div>
      <div className={`flex-1 ${green ? "bg-[#52896d]" : "bg-[#5a4888]"}`}>
        {green ? (
          <Wave w={w} h={51} seed={i * 37 + 11} dense={c.dense} ink="#1d3d2c" l1="#c5d59c" l2="#a9c0b3" ly1={19} ly2={25} />
        ) : (
          <Wave w={w} h={51} seed={i * 53 + 7} dense={c.dense} ink="#231a45" l1="#a79fbd" l2="#9a92ae" ly1={19} ly2={25} tri="#d8d4e0" />
        )}
      </div>
      <div className={`absolute left-0 top-0 bottom-0 w-[2px] ${green ? "bg-[#c6d8cc]" : "bg-[#b0a9c6]"}`} />
    </div>
  );
};

const greenClips: Clip[] = [
  { x: 185, end: 266, name: "平凡之路_..", dense: 0.55 },
  { x: 267, end: 344, name: "平凡之路_..", dense: 0.55 },
  { x: 345, end: 509, name: "平凡之路_(DJ叶奎)-华语群星", dense: 0.08 },
  { x: 510, end: 688, name: "平凡之路_(DJ叶奎)-华语群星", tag: "音量", dense: 0.08 },
  { x: 690, end: 770, name: "平凡之路_..", dense: 0.5 },
  { x: 772, end: 842, name: "平凡之..", dense: 0.5 },
  { x: 848, end: 1015, name: "平凡之路_(DJ叶奎)-华语群星 _", dense: 0.08 },
  { x: 1020, end: 1178, name: "平凡之路_(DJ叶奎)-华语群星", dense: 0.08 },
  { x: 1180, end: 1345, name: "平凡之路_(DJ叶奎)-华语群星", dense: 0.1 },
  { x: 1347, end: 1513, name: "平凡之路_(DJ叶奎)-华语群星", dense: 0.5 },
];

const purpleClips: Clip[] = [
  { x: 356, end: 510, name: "平凡之路_(DJ叶奎)-华语群星", dense: 0.4 },
  { x: 513, end: 678, name: "平凡之路_(DJ叶奎)-华语群星", dense: 0.15 },
  { x: 689, end: 694, name: "", dense: 0 },
  { x: 968, end: 1123, name: "平凡之路_(DJ叶奎)-华语群星", dense: 0.15 },
  { x: 1125, end: 1456, name: "平凡之路_(DJ叶奎)-华语群星", tag: "音量", dense: 0.1 },
];

const markerXs = [185, 512, 904, 1007, 1236];
const barX = (n: number) => 165 + (n - 1) * 10.27;
const bars: number[] = [];
for (let n = 1; n <= 137; n += 4) bars.push(n);

const Track = ({ h, bg = "bg-[#1c1c1c]", sep = true, children }: { h: string; bg?: string; sep?: boolean; children?: React.ReactNode }) => (
  <div className={`${h} relative shrink-0 ${bg} ${sep ? "border-b-[3px] border-[#2a2a2a]" : ""}`}>{children}</div>
);

const TrackHead = ({ name, val, strip, swatch, h, bg = "bg-[#222222]", down = false }: { name: string; val: string; strip: string; swatch: string; h: string; bg?: string; down?: boolean }) => (
  <div className={`${h} shrink-0 flex overflow-hidden border-b-[3px] border-[#2a2a2a] ${bg}`}>
    <div className={`ml-[8px] w-[13px] shrink-0 flex flex-col items-center justify-between pt-[4px] pb-[4px] ${strip}`}>
      <Dots />
      <div className={`w-[8px] h-[8px] border border-black ${swatch}`} />
    </div>
    <div className="flex-1 flex flex-col text-[#8a8a8a]">
      <div className="mt-[7px] h-[17px] flex items-center pl-[8px] text-[12px]">
        <WaveIcon />
        <span className="ml-[4px] w-[54px]">{name}</span>
        <span className="w-[22px] text-[11px]">M</span>
        <span className="w-[22px] text-[11px]">S</span>
        <span className="text-[11px]">R</span>
      </div>
      <div className="mt-[6px] h-[19px] flex items-center pl-[4px] shrink-0">
        <Bars />
        <div className="ml-[5px]">
          <Knob r={8} down={down} />
        </div>
        <span className="ml-[2px] text-[11.500px] text-[#3b8ad9]">{val}</span>
      </div>
    </div>
  </div>
);

const TimelineTools = () => (
  <div className="h-[25px] shrink-0 pt-[2px] pl-[9px] flex items-start">
    <div className="w-[21px] h-[22px] flex items-center justify-center bg-[#1a1a1a]">
      <svg width="16" height="14" viewBox="0 0 16 14">
        <path d="M0 4h12M16 4l-5-3.500v7zM16 10H4M0 10l5-3.500v7z" stroke="#3796ee" fill="#3796ee" strokeWidth="1.300" />
      </svg>
    </div>
    <div className="w-[21px] h-[22px] flex items-center justify-center italic text-[18px] leading-none text-[#a8a8a8] [font-family:'Liberation_Serif',serif]">fx</div>
    <div className="w-[22px] h-[22px] flex items-center justify-center">
      <svg width="13" height="15" viewBox="0 0 14 15">
        <path d="M3 0v15M3 7h7M14 7l-5-4v8z" stroke="#c0c0c0" fill="#c0c0c0" strokeWidth="2" />
      </svg>
    </div>
    <div className="w-[22px] h-[22px] flex items-center justify-center bg-[#1a1a1a]">
      <svg width="13" height="14" viewBox="0 0 13 14">
        <path d="M4.500 1h4l4 12H.5z" fill="#2b7fd0" stroke="#3796ee" />
      </svg>
    </div>
    <div className="w-[21px] h-[22px] flex items-center justify-center bg-[#1a1a1a]">
      <svg width="15" height="15" viewBox="0 0 15 15">
        <circle cx="7.500" cy="6" r="4" fill="none" stroke="#3796ee" />
        <path d="M0 13.500h15M7.500 2V0" stroke="#3796ee" strokeWidth="1.300" />
      </svg>
    </div>
    <div className="w-[21px] h-[22px] flex items-center justify-center bg-[#1a1a1a]">
      <svg width="13" height="13" viewBox="0 0 13 13">
        <path d="M1.500 13V6.500a5 5 0 0110 0V13" fill="none" stroke="#3796ee" strokeWidth="3" />
      </svg>
    </div>
    <div className="w-[21px] h-[22px] flex items-center justify-center bg-[#1a1a1a]">
      <svg width="11" height="15" viewBox="0 0 11 15">
        <path d="M0 0h11v5l-4 2v8H4V7L0 5z" fill="#3796ee" />
      </svg>
    </div>
  </div>
);

const scrollSegs = [
  { h: "h-[37px]", c: "bg-[#6f8f80]" },
  { h: "h-[37px]", c: "bg-[#8f8f62]" },
  { h: "h-[37px]", c: "bg-[#7e57f0]" },
  { h: "h-[20px]", c: "bg-[#7c6f9a]" },
  { h: "h-[16px]", c: "bg-[#5e4a80]" },
  { h: "h-[36px]", c: "bg-[#4f7583]" },
  { h: "h-[35px]", c: "bg-[#54608a]" },
];

const Editor = () => (
  <div className={`mt-[2px] h-[350px] shrink-0 flex flex-col ${PANEL} overflow-hidden`}>
    <div className="h-[20px] shrink-0 mt-[2px] flex items-center pl-[12px] gap-[9px] text-[11.500px] tracking-[-0.2px] text-[#8d8d8d]">
      编辑器: 平凡之路_(DJ叶奎)-华语群星.sesx * <Burger />
    </div>
    <div className="mt-[14px] h-[30px] shrink-0 flex items-center pl-[7px]">
      <div className="w-[1546px] h-[30px] bg-black flex">
        <div className="relative w-[783px] h-[30px] border-2 border-[#555] rounded-[5px] bg-[#3a3a3a]">
          <svg width="779" height="26" viewBox="0 0 779 26" className="block">
            <path d="M7 3V24" stroke="#e3e61e" />
            <path d="M0 2.500H779" stroke="#607a6b" />
            <path d="M106 10.500H285M293 10.500h2M336 12.500h29M427 12.500h45M445 10.500H472M508 9.500H714" stroke="#8b82ad" strokeWidth="1.500" />
          </svg>
        </div>
      </div>
      <svg width="16" height="16" viewBox="0 0 16 16" className="ml-[14px]">
        <circle cx="7" cy="7" r="4" fill="none" stroke="#aaa" />
        <path d="M10 10l5 5M7 0v2M7 12v2M0 7h2M12 7h2" stroke="#aaa" />
      </svg>
    </div>
    <div className="flex-1 flex overflow-hidden">
      <div className="w-[164px] shrink-0 flex flex-col">
        <div className="h-[19px] shrink-0" />
        <TimelineTools />
        <TrackHead h="h-[68px]" name="轨道 1" val="+0" strip="bg-[#528a6f]" swatch="bg-[#5dffa6]" />
        <TrackHead h="h-[68px]" name="轨道 5" val="-0.1" strip="bg-[#85855a]" swatch="bg-[#e8f24c]" />
        <TrackHead h="h-[68px]" name="轨道 3" val="-∞" strip="bg-[#6b36ea]" swatch="bg-[#5a28e0]" bg="bg-[#282828]" down />
        <TrackHead h="h-[68px]" name="轨道 4" val="-∞" strip="bg-[#5f3f8f]" swatch="bg-[#8a2fe8]" down />
      </div>
      <div className="relative w-[1408px] shrink-0 flex flex-col overflow-hidden">
        <div className="relative h-[19px] shrink-0">
          {markerXs.map((x) => (
            <div key={x} className="absolute top-[4px] flex items-start gap-[2px] text-[11.500px] leading-[14px] text-[#a0a0a0]" style={{ left: x - 164 - 5 }}>
              <Shield />
              EOD
            </div>
          ))}
        </div>
        <div className="relative h-[25px] shrink-0 border-t border-l border-black bg-[#1e1e1e] text-[11.500px] text-[#868686]">
          <span className="absolute left-[4px] top-[1px]">132.0 bpm</span>
          {bars.map((n) => (
            <div key={n}>
              {n > 1 && (n - 1) % 16 === 0 && (
                <span className="absolute top-[1px] w-[30px] -ml-[15px] text-center" style={{ left: barX(n) - 164 }}>
                  {n}
                </span>
              )}
              <div className={`absolute bottom-0 w-px bg-[#7a7a7a] ${(n - 1) % 16 === 0 ? "h-[8px]" : "h-[5px]"}`} style={{ left: barX(n) - 164 }} />
            </div>
          ))}
        </div>
        <Track h="h-[68px]">
          <div className="absolute left-[8px] top-0 w-[13px] bottom-0 bg-[#17261e]" />
          <svg width="12" height="51" viewBox="0 0 12 51" className="absolute left-[9px] top-[14px]">
            <path d="M3 0h8L3 7z" fill="#e2ebe5" />
            <path d="M0 33h12M0 39h12" stroke="#9fb5a8" />
          </svg>
          {greenClips.map((c, i) => (
            <Clipped key={c.x} c={c} palette="green" i={i} />
          ))}
          <div className="absolute top-0 left-[1349px] w-[44px] bottom-0 flex flex-col">
            <div className="h-[14px] shrink-0 flex items-center justify-end pr-[5px] text-[10.500px] text-[#cfcfcf] bg-[#1f3b2d]">
              <span className="mr-[9px]">音量</span>
              <svg width="8" height="6" viewBox="0 0 8 6">
                <path d="M0 0h8L4 6z" fill="#d8d8d8" />
              </svg>
            </div>
            <svg width="44" height="51" viewBox="0 0 44 51" className="block">
              <rect width="44" height="51" fill="#1b3226" />
              <path d="M44 0H36L44 7ZM0 14H44M0 31H44M0 42H44" fill="#e2ebe5" stroke="#4f8a6d" strokeWidth=".7" />
              <path d="M0 19.500H44M0 25.500H44" stroke="#a9c0b3" />
            </svg>
          </div>
        </Track>
        <Track h="h-[68px]" />
        <Track h="h-[68px]" bg="bg-[#4d4d4d]">
          {purpleClips.map((c, i) => (
            <Clipped key={c.x} c={c} palette="purple" i={i} />
          ))}
        </Track>
        <Track h="h-[36px]" sep={false}>
          <div className="absolute left-[606px] top-0 w-[52px] h-full bg-[#241a45] border-l-2 border-[#8a80a8]">
            <div className="h-[14px] flex items-center justify-between pl-[2px] pr-[8px] text-[10.500px] leading-[14px] text-[#cfcfcf]">
              平_
              <svg width="8" height="6" viewBox="0 0 8 6">
                <path d="M0 0h8L4 6z" fill="#d8d8d8" />
              </svg>
            </div>
            <svg width="50" height="22" viewBox="0 0 50 22" className="block">
              <path d="M0 0H7L0 6ZM50 0H43L50 6Z" fill="#b9b2ce" />
              <path d="M0 4C3 10 6 15 10 16H50V20H0Z" fill="#5a4888" />
              <path d="M0 19.500H50" stroke="#9a92ae" strokeWidth="1.500" />
            </svg>
          </div>
          <div className="absolute left-[771px] top-0 w-[81px] h-full bg-[#8a30e6]">
            <div className="h-[14px] flex items-center justify-between pl-[3px] pr-[6px] bg-[#b2a6c8] text-[10.500px] leading-[14px] text-white">
              平凡之路_..
              <svg width="8" height="6" viewBox="0 0 8 6">
                <path d="M0 0h8L4 6z" fill="#fff" />
              </svg>
            </div>
            <svg width="81" height="22" viewBox="0 0 81 22" className="block">
              <path d="M0 0H7L0 6ZM81 0H74L81 6Z" fill="#fff" />
              <path d="M0 20.500H81" stroke="#e4d8f0" strokeWidth="1.500" />
              <rect x="13" y="3" width="11" height="11" fill="#9a9a9a" />
              <path d="M13 14L24 3V14Z" fill="#444" />
              <rect x="59" y="3" width="11" height="11" fill="#9a9a9a" />
              <path d="M59 3L70 14H59Z" fill="#444" />
            </svg>
          </div>
        </Track>
        <svg width="1408" height="284" viewBox="0 0 1408 284" className="absolute left-0 top-0 pointer-events-none">
          {markerXs.map((x) => (
            <path key={x} d={`M${x - 164}.5 18V284`} stroke="#e8e8e8" strokeDasharray="2 2" />
          ))}
          <path d="M11.500 34V284" stroke="#e3e61e" />
          <path d="M6 34h11v5l-5.500 4L6 39z" fill="#2e8fea" />
        </svg>
      </div>
      <div className="ml-[2px] w-[14px] h-[284px] shrink-0 pt-[44px]">
        <div className="relative flex flex-col gap-[2px] pt-[4px] rounded-t-[3px]">
          {scrollSegs.map((s) => (
            <div key={s.c} className={`${s.h} ${s.c}`} />
          ))}
          <div className="absolute -left-[1px] -right-[1px] top-0 h-[143px] rounded-[3px] border border-[#666] bg-white/10" />
        </div>
      </div>
    </div>
  </div>
);

const TI = ({ children }: { children: React.ReactNode }) => <div className="w-[30px] flex justify-center">{children}</div>;

const ZoomI = ({ kind, minus = false }: { kind: string; minus?: boolean }) => (
  <svg width="18" height="18" viewBox="0 0 18 18">
    <circle cx="10" cy="8" r="4.500" fill="none" stroke="#a0a0a0" />
    <path d={`M13 11.500l4 5M8 8h4${minus ? "" : "M10 6v4"}`} stroke="#a0a0a0" fill="none" />
    {kind === "v" && <path d="M2.500 0v16M.5 .5h4M.5 15.500h4" stroke="#a0a0a0" fill="none" />}
    {kind === "h" && <path d="M1 .5h16M1 0v2M17 0v2" stroke="#a0a0a0" fill="none" />}
    {kind === "c" && <path d="M10 0v3M10 13v3M2 8h3M15 8h3" stroke="#a0a0a0" fill="none" />}
    {kind === "l" && <path d="M4 4L1 8l3 4" stroke="#a0a0a0" fill="none" />}
    {kind === "r" && <path d="M1 4l3 4-3 4" stroke="#a0a0a0" fill="none" />}
  </svg>
);

const Transport = () => (
  <div className={`h-[38px] shrink-0 flex items-center pl-[12px] border-t border-[#2a2a2a] ${PANEL}`}>
    <span className="w-[563px] text-[16px] text-[#3b8ad9]">2:1.00</span>
    <TI><div className="w-[8px] h-[9px] bg-[#4e4e4e]" /></TI>
    <TI><svg width="11" height="12" viewBox="0 0 11 12"><path d="M0 0l11 6L0 12z" fill="#b5b5b5" /></svg></TI>
    <TI><svg width="8" height="12" viewBox="0 0 8 12"><path d="M0 0h3v12H0zM5 0h3v12H5z" fill="#484848" /></svg></TI>
    <TI><svg width="11" height="12" viewBox="0 0 11 12"><path d="M0 0h2v12H0zM11 0L3 6l8 6z" fill="#b5b5b5" /></svg></TI>
    <TI><svg width="15" height="10" viewBox="0 0 15 10"><path d="M7 0L0 5l7 5zM15 0L8 5l7 5z" fill="#b5b5b5" /></svg></TI>
    <TI><svg width="15" height="10" viewBox="0 0 15 10"><path d="M0 0l7 5-7 5zM8 0l7 5-7 5z" fill="#b5b5b5" /></svg></TI>
    <TI><svg width="11" height="12" viewBox="0 0 11 12"><path d="M11 0H9v12h2zM0 0l8 6-8 6z" fill="#b5b5b5" /></svg></TI>
    <TI><div className="w-[11px] h-[11px] rounded-full bg-[#e8233c]" /></TI>
    <TI>
      <svg width="15" height="14" viewBox="0 0 15 14">
        <path d="M1 4v9h11V9" stroke="#c0c0c0" strokeWidth="2" fill="none" />
        <path d="M4 9c0-3 3-4 5-4V2l6 4-6 4V7.500C7 7.500 5 8 4 9z" fill="#c0c0c0" />
      </svg>
    </TI>
    <TI>
      <svg width="17" height="14" viewBox="0 0 17 14">
        <path d="M8.500 0v14" stroke="#a0a0a0" strokeDasharray="2 1" />
        <path d="M7 7L3 3.500v7zM10 7l4-3.500v7z" fill="#c0c0c0" />
        <path d="M0 7h2M15 7h2" stroke="#c0c0c0" />
      </svg>
    </TI>
    <div className="ml-[444px] flex items-center">
      <TI><ZoomI kind="v" /></TI>
      <TI><ZoomI kind="v" minus /></TI>
      <TI><ZoomI kind="h" /></TI>
      <TI><ZoomI kind="h" minus /></TI>
      <TI><ZoomI kind="c" minus /></TI>
      <TI><ZoomI kind="l" minus /></TI>
      <TI><ZoomI kind="r" minus /></TI>
      <TI><ZoomI kind="r" minus /></TI>
      <TI><ZoomI kind="v" /></TI>
    </div>
  </div>
);

const StatusBar = () => (
  <div className={`h-[22px] shrink-0 flex items-center pl-[8px] border-t border-[#1a1a1a] text-[11.500px] text-[#808080] ${PANEL}`}>
    <span className="w-[1223px]">已停止</span>
    <span className="w-[125px] whitespace-nowrap">
      44100 Hz <span className="text-[7px] align-[1px]">●</span> 32 位混合
    </span>
    <span className="w-[60px] whitespace-nowrap">83.26 MB</span>
    <span className="w-[57px] whitespace-nowrap">272:0.12</span>
    <span className="whitespace-nowrap">20.98 GB 空闲</span>
  </div>
);

const bevel = "border border-t-white border-l-white border-b-[#404040] border-r-[#404040]";

const TaskBtn = ({ w, active = false, gap = "gap-[3px]", icon, children }: { w: string; active?: boolean; gap?: string; icon: React.ReactNode; children: React.ReactNode }) => (
  <div
    className={`${w} h-[22px] shrink-0 flex items-center pl-[3px] ${gap} whitespace-nowrap overflow-hidden text-[11.500px] text-black [font-family:'Liberation_Mono','Noto_Sans_CJK_SC',monospace] ${
      active ? "bg-[#f7f6f3] font-bold border border-t-[#404040] border-l-[#404040] border-b-white border-r-white" : bevel
    }`}
  >
    {icon}
    {children}
  </div>
);

const Taskbar = () => (
  <div className="h-[28px] shrink-0 flex items-center bg-[#d4d0c8] border-t border-white">
    <div className={`ml-[2px] w-[48px] h-[22px] flex items-center pl-[3px] gap-[2px] text-[13px] text-black ${bevel}`}>
      <svg width="15" height="14" viewBox="0 0 15 14">
        <path d="M1 2l6-1v5H1z" fill="#e8602c" />
        <path d="M8 1l6-1v6H8z" fill="#7cbb3a" />
        <path d="M1 7h6v6l-6-1z" fill="#2f8ae0" />
        <path d="M8 7h6v7l-6-1z" fill="#f3c11c" />
      </svg>
      开始
    </div>
    <svg width="16" height="16" viewBox="0 0 16 16" className="ml-[15px]">
      <circle cx="8" cy="8" r="7.500" fill="#dd4b39" />
      <path d="M8 8L14 12A7.500 7.500 0 018 15.500 7.500 7.500 0 01.9 5z" fill="#2e9e4f" />
      <path d="M8 4h6.900A7.500 7.500 0 018 15.500z" fill="#f6c52e" />
      <circle cx="8" cy="8" r="3.500" fill="#3b7de8" stroke="#fff" />
    </svg>
    <div className="ml-[18px] w-[17px] h-[17px] rounded-full border border-[#666] bg-[#eee] flex items-center justify-center text-[10px] font-bold text-[#c02020] [font-family:'Liberation_Serif',serif]">N</div>
    <div className="ml-[10px] flex gap-[2px]">
      <TaskBtn
        w="w-[159px]"
        active
        gap="gap-[4px]"
        icon={<div className="shrink-0 w-[15px] h-[18px] border border-[#23d8b0] bg-[#00332c] text-[#33e0bb] text-[9px] leading-[16px] text-center [font-family:'Noto_Sans',sans-serif] font-normal">Au</div>}
      >
        Adobe Audition ...
      </TaskBtn>
      <TaskBtn
        w="w-[161px]"
        gap="gap-[5px]"
        icon={
          <svg width="16" height="16" viewBox="0 0 16 16" className="shrink-0">
            <rect x="2" y="1" width="12" height="10" fill="#111" stroke="#888" />
            <path d="M3 9l2-4 2 3 3-5 3 4" stroke="#3ce04a" fill="none" />
            <path d="M4 13h8v2H4z" fill="#aaa" />
          </svg>
        }
      >
        <span className="text-[10.500px]">Windows 任务管理器</span>
      </TaskBtn>
      <TaskBtn
        w="w-[160px]"
        gap="gap-[4px]"
        icon={
          <svg width="15" height="15" viewBox="0 0 15 15" className="shrink-0 ml-[1px]">
            <circle cx="7.500" cy="7.500" r="7.500" fill="#151515" />
            <circle cx="7.500" cy="4.500" r="2" fill="#d8d8d8" />
            <circle cx="4.500" cy="9.500" r="2" fill="#d8d8d8" />
            <circle cx="10.500" cy="9.500" r="2" fill="#d8d8d8" />
          </svg>
        }
      >
        <span className="text-[10.500px]">OBS 22.0.1 (64-bit,...</span>
      </TaskBtn>
    </div>
    <svg width="16" height="16" viewBox="0 0 16 16" className="ml-[735px]">
      <rect x="0" y="7" width="16" height="8" fill="#bbb" stroke="#777" />
      <path d="M2 9h12M2 11h12M2 13h12" stroke="#777" strokeDasharray="1 1" />
      <path d="M6 7L12 1" stroke="#777" />
    </svg>
    <div className="ml-[4px] w-px h-[22px] bg-[#888] border-r border-white" />
    <div className="ml-[7px] w-[16px] h-[16px] rounded-full bg-[#1c3a9e] border border-[#99a] text-white text-[11px] font-bold leading-[14px] text-center">?</div>
    <div className="ml-[7px] w-px h-[22px] bg-[#888] border-r border-white" />
    <div className="ml-[4px] w-[10px] flex flex-col items-center gap-[3px]">
      <svg width="8" height="7" viewBox="0 0 8 7">
        <path d="M2 .5h5v4H2zM.5 2.500h5v4h-5z" fill="#d4d0c8" stroke="#000" />
      </svg>
      <svg width="6" height="4" viewBox="0 0 6 4">
        <path d="M0 0h6L3 4z" fill="#000" />
      </svg>
    </div>
    <div className="ml-[3px] flex-1 h-[24px] flex items-center pl-[8px] border border-[#808080] border-r-white border-b-white">
      <svg width="15" height="16" viewBox="0 0 15 16">
        <circle cx="8" cy="7" r="7" fill="#151515" />
        <circle cx="8" cy="4" r="2" fill="#d8d8d8" />
        <circle cx="5" cy="9" r="2" fill="#d8d8d8" />
        <circle cx="4" cy="12" r="3.500" fill="#d0202c" />
      </svg>
      <div className="ml-[9px] w-[11px] h-[16px] bg-[#0a6b22] border-b-2 border-[#36e04a]" />
      <svg width="14" height="18" viewBox="0 0 14 18" className="ml-[7px]">
        <rect x="1" y="6" width="12" height="11" fill="#aaa" stroke="#555" />
        <path d="M4 0h4v8H4z" fill="#eee" stroke="#555" />
      </svg>
      <svg width="15" height="16" viewBox="0 0 15 16" className="ml-[11px]">
        <path d="M1 5h3l4-4v14l-4-4H1z" fill="#ccc" stroke="#777" />
        <path d="M10 4c2 2 2 6 0 8M12 2c3 3 3 9 0 12" stroke="#888" fill="none" />
      </svg>
      <svg width="15" height="18" viewBox="0 0 15 18" className="ml-[10px]">
        <path d="M1 1v16" stroke="#666" />
        <path d="M2 1h8v8H2z" fill="#eee" stroke="#999" />
        <circle cx="10" cy="13" r="4.500" fill="#d81c2c" />
        <path d="M8 11l4 4M12 11l-4 4" stroke="#fff" />
      </svg>
      <span className="ml-[10px] w-[36px] text-[11.500px] text-black [font-family:'Liberation_Mono',monospace] whitespace-nowrap">21:00</span>
      <svg width="16" height="16" viewBox="0 0 16 16" className="ml-[3px]">
        <rect x=".5" y="1.500" width="15" height="13" fill="#2f6fc0" stroke="#1c4a8a" />
        <path d="M1 11l6-3 8 3v3H1z" fill="#a8c8e8" />
      </svg>
    </div>
  </div>
);

export default function App() {
  return (
    <div className="w-[1600px] h-[1200px] flex flex-col overflow-hidden bg-[#171717] [font-family:'Noto_Sans_CJK_SC','Noto_Sans',sans-serif]">
      <TitleBar />
      <MenuBar />
      <Toolbar />
      <div className="h-[694px] shrink-0 flex">
        <LeftColumn />
        <History />
        <Mixer />
        <Markers />
        <Levels />
      </div>
      <Editor />
      <Transport />
      <StatusBar />
      <Taskbar />
    </div>
  );
}
